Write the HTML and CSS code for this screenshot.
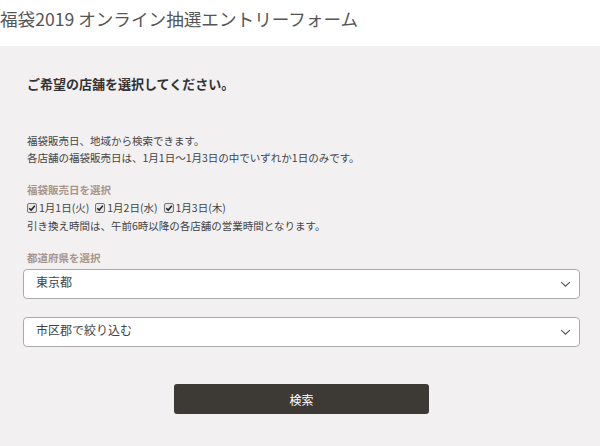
FILE: index.html
```html
<!DOCTYPE html>
<html lang="ja">
<head>
<meta charset="utf-8">
<title>福袋2019 オンライン抽選エントリーフォーム</title>
<link rel="stylesheet" href="styles.css">
</head>
<body>
<header class="site-header">
  <h1 class="site-title">福袋2019 オンライン抽選エントリーフォーム</h1>
</header>
<main class="form-area">
  <h2 class="lead">ご希望の店舗を選択してください。</h2>
  <p class="desc">福袋販売日、地域から検索できます。<br>各店舗の福袋販売日は、1月1日～1月3日の中でいずれか1日のみです。</p>

  <div class="label">福袋販売日を選択</div>
  <div class="checks">
    <label class="check"><span class="box"><svg viewBox="0 0 10 10" width="8" height="8"><path d="M1.5 5.2 L4 7.6 L8.6 2.2" fill="none" stroke="#222" stroke-width="1.8"/></svg></span>1月1日(火)</label>
    <label class="check"><span class="box"><svg viewBox="0 0 10 10" width="8" height="8"><path d="M1.5 5.2 L4 7.6 L8.6 2.2" fill="none" stroke="#222" stroke-width="1.8"/></svg></span>1月2日(水)</label>
    <label class="check"><span class="box"><svg viewBox="0 0 10 10" width="8" height="8"><path d="M1.5 5.2 L4 7.6 L8.6 2.2" fill="none" stroke="#222" stroke-width="1.8"/></svg></span>1月3日(木)</label>
  </div>
  <p class="note">引き換え時間は、午前6時以降の各店舗の営業時間となります。</p>

  <div class="label label-pref">都道府県を選択</div>
  <div class="select">
    <span>東京都</span>
    <svg class="chev" viewBox="0 0 12 8" width="11" height="7"><path d="M1 1.2 L6 6 L11 1.2" fill="none" stroke="#555" stroke-width="1.3"/></svg>
  </div>
  <div class="select select-city">
    <span>市区郡で絞り込む</span>
    <svg class="chev" viewBox="0 0 12 8" width="11" height="7"><path d="M1 1.2 L6 6 L11 1.2" fill="none" stroke="#555" stroke-width="1.3"/></svg>
  </div>

  <div class="actions">
    <button class="btn" type="button">検索</button>
  </div>
</main>
</body>
</html>
```
FILE: styles.css
```css
* { box-sizing: border-box; }
html, body {
  margin: 0;
  padding: 0;
  height: 100%;
}
body {
  font-family: "Noto Sans CJK JP", "Noto Sans", sans-serif;
  color: #444;
  background: #f2f0f0;
}
.site-header {
  background: #ffffff;
  height: 46px;
  padding: 6px 0 0 0;
}
.site-title {
  margin: 0;
  font-size: 17.6px;
  font-weight: 400;
  line-height: 26px;
  color: #555;
  letter-spacing: 0;
}
.form-area {
  padding: 28px 20px 0 23px;
}
.lead {
  margin: 0 0 0 4px;
  font-size: 13px;
  font-weight: 700;
  line-height: 20px;
  color: #333;
}
.desc {
  margin: 38px 0 0 4px;
  font-size: 10.5px;
  line-height: 17px;
  color: #444;
}
.label {
  margin: 15px 0 0 4px;
  font-size: 10.5px;
  font-weight: 700;
  line-height: 18px;
  color: #a8958c;
}
.checks {
  display: flex;
  gap: 6px;
  margin-left: 4px;
  font-size: 10.5px;
  line-height: 18px;
  color: #444;
}
.check {
  display: flex;
  align-items: center;
  gap: 2px;
}
.box {
  width: 10px;
  height: 10px;
  border: 1px solid #777;
  border-radius: 2px;
  background: #e6e6e6;
  display: inline-flex;
  align-items: center;
  justify-content: center;
}
.note {
  margin: 0 0 0 4px;
  font-size: 10.5px;
  line-height: 18px;
  color: #444;
}
.label-pref {
  margin-top: 14px;
}
.select {
  margin-top: 2px;
  height: 30px;
  background: #fff;
  border: 1px solid #aaa;
  border-radius: 4px;
  display: flex;
  align-items: center;
  justify-content: space-between;
  padding: 0 8px 0 12px;
  font-size: 12px;
  color: #444;
}
.select span { line-height: 18px; margin-top: -4px; }
.select-city {
  margin-top: 18px;
}
.chev { display: block; }
.actions {
  display: flex;
  justify-content: center;
  margin-top: 37px;
}
.btn {
  width: 255px;
  height: 30px;
  border: none;
  border-radius: 3px;
  background: #3d3935;
  color: #fff;
  font-family: inherit;
  font-size: 12px;
  padding: 0;
}
```
